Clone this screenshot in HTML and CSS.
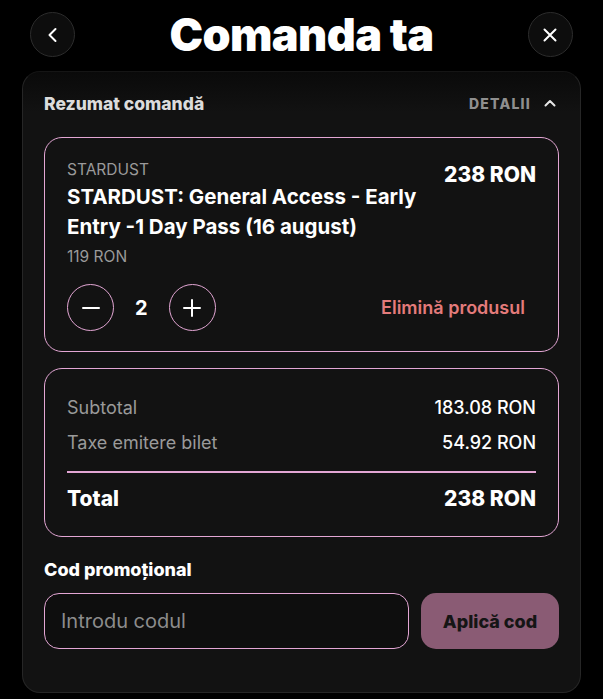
FILE: index.html
```html
<!DOCTYPE html>
<html lang="ro">
<head>
  <meta charset="UTF-8" />
  <title>Comanda ta</title>
  <link rel="stylesheet" href="styles.css">
</head>
<body>

  <div class="header">
    <button class="round-btn" aria-label="Înapoi">
      <svg width="20" height="20" viewBox="0 0 20 20"><path d="M12.5 4 L6.5 10 L12.5 16" fill="none" stroke="#fff" stroke-width="2" stroke-linecap="round" stroke-linejoin="round"/></svg>
    </button>
    <h1>Comanda ta</h1>
    <button class="round-btn" aria-label="Închide">
      <svg width="20" height="20" viewBox="0 0 20 20"><path d="M4.5 4.5 L15.5 15.5 M15.5 4.5 L4.5 15.5" fill="none" stroke="#fff" stroke-width="2" stroke-linecap="round"/></svg>
    </button>
  </div>

  <div class="panel">
    <div class="summary-head">
      <span class="summary-title">Rezumat comandă</span>
      <span class="details">DETALII
        <svg width="14" height="14" viewBox="0 0 14 14"><path d="M2.5 9.5 L7 5 L11.5 9.5" fill="none" stroke="#e6e6e6" stroke-width="2" stroke-linecap="round" stroke-linejoin="round"/></svg>
      </span>
    </div>

    <div class="card item">
      <div class="item-top">
        <div class="item-info">
          <div class="muted small">STARDUST</div>
          <div class="item-name">STARDUST: General Access - Early Entry -1 Day Pass (16 august)</div>
          <div class="muted small unit">119 RON</div>
        </div>
        <div class="item-price">238 RON</div>
      </div>
      <div class="item-actions">
        <div class="qty">
          <button class="qty-btn" aria-label="Scade">
            <svg width="22" height="22" viewBox="0 0 22 22"><path d="M3 11 H19" stroke="#fff" stroke-width="2" stroke-linecap="round"/></svg>
          </button>
          <span class="qty-value">2</span>
          <button class="qty-btn" aria-label="Adaugă">
            <svg width="22" height="22" viewBox="0 0 22 22"><path d="M3 11 H19 M11 3 V19" stroke="#fff" stroke-width="2" stroke-linecap="round"/></svg>
          </button>
        </div>
        <a class="remove">Elimină produsul</a>
      </div>
    </div>

    <div class="card totals">
      <div class="row"><span class="muted">Subtotal</span><span>183.08 RON</span></div>
      <div class="row"><span class="muted">Taxe emitere bilet</span><span>54.92 RON</span></div>
      <div class="divider"></div>
      <div class="row total"><span>Total</span><span>238 RON</span></div>
    </div>

    <div class="promo-label">Cod promoțional</div>
    <div class="promo">
      <input type="text" placeholder="Introdu codul" />
      <button class="apply">Aplică cod</button>
    </div>
  </div>

</body>
</html>
```

FILE: styles.css
```css
body {
  margin: 0;
  background-color: #000;
  color: #fff;
  font-family: Inter, 'Noto Sans', sans-serif;
}

.header {
  display: flex;
  align-items: center;
  justify-content: space-between;
  padding: 0 30px;
  height: 69px;
}

.header h1 {
  margin: 0;
  font-size: 45px;
  font-weight: 900;
  letter-spacing: -0.6px;
  line-height: 1;
}

.round-btn {
  width: 45px;
  height: 45px;
  border-radius: 50%;
  border: 1px solid #2c2c2c;
  background: #0d0d0d;
  display: flex;
  align-items: center;
  justify-content: center;
  padding: 0;
}

.panel {
  margin: 2px 22px 0 22px;
  padding: 17px 21px 43px 21px;
  background: linear-gradient(#0a0a0a, #121212 40px);
  border: 1px solid #262626;
  border-top-color: #151515;
  border-radius: 18px;
}

.summary-head {
  display: flex;
  justify-content: space-between;
  align-items: center;
  height: 28px;
  margin-bottom: 20px;
}

.summary-title {
  font-size: 17.5px;
  font-weight: 800;
  color: #dcdcdc;
}

.details {
  display: flex;
  align-items: center;
  gap: 12px;
  font-size: 14px;
  font-weight: 800;
  letter-spacing: 1.2px;
  color: #8f8f8f;
  padding-right: 2px;
}

.card {
  border: 1.5px solid #e3a6d4;
  border-radius: 18px;
  padding: 0 22px;
}

.item {
  padding-top: 23px;
  padding-bottom: 20px;
}

.item-top {
  display: flex;
  justify-content: space-between;
  gap: 20px;
}

.muted {
  color: #9a9a9a;
}

.small {
  font-size: 15.5px;
  line-height: 18px;
}

.item-name {
  font-size: 20.5px;
  font-weight: 700;
  line-height: 30px;
  margin: 3px 0 6px 0;
  max-width: 370px;
}

.item-price {
  font-size: 21px;
  font-weight: 800;
  white-space: nowrap;
  margin-top: 1px;
}

.item-actions {
  display: flex;
  justify-content: space-between;
  align-items: center;
  margin-top: 18px;
}

.qty {
  display: flex;
  align-items: center;
  gap: 21px;
}

.qty-btn {
  width: 47px;
  height: 47px;
  border-radius: 50%;
  border: 1.5px solid #e3a6d4;
  background: transparent;
  display: flex;
  align-items: center;
  justify-content: center;
  padding: 0;
}

.qty-value {
  font-size: 20px;
  font-weight: 700;
}

.remove {
  color: #e47b7b;
  font-size: 18px;
  font-weight: 600;
  padding-right: 11px;
}

.totals {
  margin-top: 16px;
  padding-top: 28px;
  padding-bottom: 24px;
}

.row {
  display: flex;
  justify-content: space-between;
  font-size: 18px;
  font-weight: 500;
  line-height: 22px;
  margin-bottom: 13px;
}

.row .muted {
  font-weight: 400;
}

.divider {
  height: 2px;
  background: #e3a6d4;
  margin: 17px 0 13px 0;
}

.row.total {
  font-size: 21px;
  font-weight: 800;
  line-height: 26px;
  margin-bottom: 0;
}

.promo-label {
  margin-top: 22px;
  font-size: 18px;
  font-weight: 800;
  line-height: 22px;
}

.promo {
  display: flex;
  gap: 12px;
  margin-top: 12px;
}

.promo input {
  flex: 1;
  min-width: 0;
  height: 56px;
  box-sizing: border-box;
  border: 1.5px solid #e3a6d4;
  border-radius: 15px;
  background: #0e0e0e;
  padding: 0 16px;
  font-family: Inter, 'Noto Sans', sans-serif;
  font-size: 20px;
  color: #fff;
}

.promo input::placeholder {
  color: #8c8c8c;
}

.apply {
  width: 138px;
  height: 56px;
  border: none;
  border-radius: 15px;
  background-color: #8a5b74;
  color: #151515;
  font-family: Inter, 'Noto Sans', sans-serif;
  font-size: 18px;
  font-weight: 800;
}
```
